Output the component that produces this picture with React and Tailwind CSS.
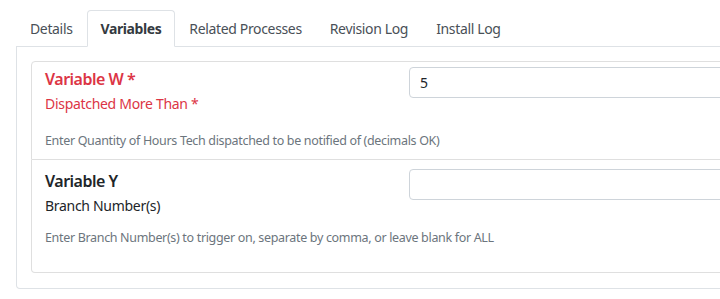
import React from 'react';

const tabs = ['Details', 'Variables', 'Related Processes', 'Revision Log', 'Install Log'];

function VariableCard({ title, label, help, value, required, className }) {
  const tone = required ? 'text-[#dc3545]' : 'text-[#212529]';
  return (
    <div className={`border border-[#dfdfdf] pl-[13px] ${className}`}>
      <div className="grid grid-cols-[364px_1fr]">
        <div>
          <div className={`text-[16px] leading-[24px] font-semibold tracking-[-0.5px] ${tone}`}>
            {title}
            {required && ' *'}
          </div>
          <div className={`sub text-[14px] leading-[21px] tracking-[-0.3px] ${tone}`}>
            {label}
            {required && ' *'}
          </div>
        </div>
        <div>
          <input
            type="text"
            defaultValue={value}
            className="w-full h-[31px] border border-[#ced4da] rounded-[4px] px-[10px] text-[14px] text-[#212529] outline-none"
          />
        </div>
      </div>
      <div className="help text-[12.5px] leading-[20px] tracking-[-0.33px] text-[#6c757d]">{help}</div>
    </div>
  );
}

function App() {
  return (
    <div
      className="w-[720px] h-[299px] overflow-hidden bg-white pt-[10px] pl-4"
      style={{ fontFamily: '"Noto Sans", sans-serif' }}
    >
      <div className="w-[760px]">
        {/* tabs */}
        <ul className="flex border-b border-[#dee2e6] h-[37px]">
          {tabs.map((t) => (
            <li key={t}>
              <button
                type="button"
                className={
                  t === 'Variables'
                    ? 'h-[37px] px-[13px] text-[14px] font-bold tracking-[-0.4px] text-[#343a40] bg-white border border-[#dee2e6] border-b-white rounded-t-[4px] -mb-px'
                    : 'h-[36px] px-[13px] text-[14px] tracking-[-0.35px] text-[#495057] border border-transparent'
                }
              >
                {t}
              </button>
            </li>
          ))}
        </ul>

        {/* tab panel */}
        <div className="border-x border-b border-[#dee2e6] rounded-b-[4px] px-[14px] pt-[14px] pb-[15px]">
          <VariableCard
            required
            title="Variable W"
            label="Dispatched More Than"
            value="5"
            help="Enter Quantity of Hours Tech dispatched to be notified of (decimals OK)"
            className="rounded-t-[4px] pt-[5px] pb-[8px] [&_.sub]:mt-[2px] [&_.help]:mt-[17px]"
          />
          <VariableCard
            title="Variable Y"
            label="Branch Number(s)"
            value=""
            help="Enter Branch Number(s) to trigger on, separate by comma, or leave blank for ALL"
            className="border-t-0 rounded-b-[4px] pt-[9px] pb-[24px] [&_.sub]:mt-[2px] [&_.help]:mt-[12px]"
          />
        </div>
      </div>
    </div>
  );
}

export default App;
